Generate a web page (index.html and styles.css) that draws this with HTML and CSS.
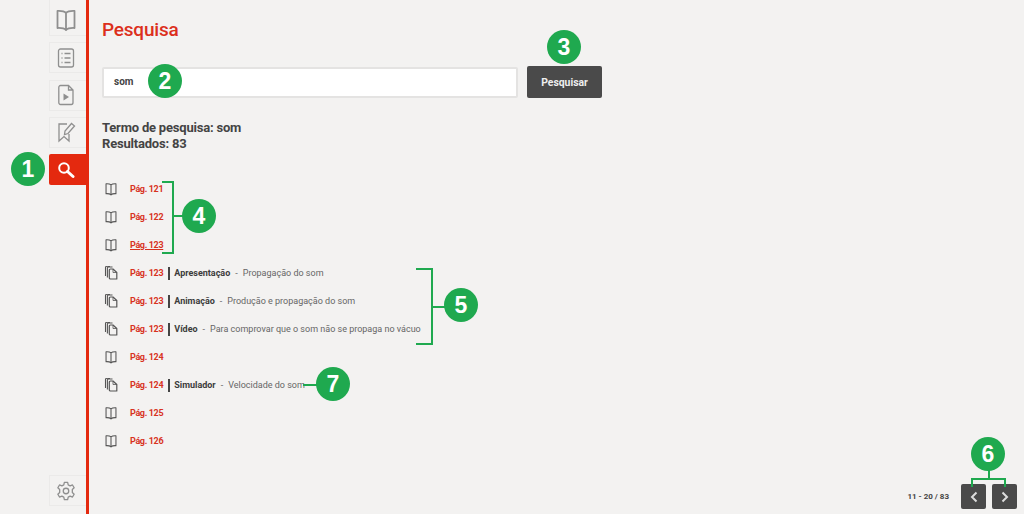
FILE: index.html
```html
<!DOCTYPE html>
<html lang="pt">
<head>
<meta charset="utf-8">
<title>Pesquisa</title>
<link rel="stylesheet" href="styles.css">
</head>
<body>
<svg class="defs" width="0" height="0">
  <symbol id="book" viewBox="0 0 24 24"><path d="M12 5C10.500 3.500 7.500 2.800 3.500 3V20C7.500 19.800 10.500 20.500 12 22C13.500 20.500 16.500 19.800 20.500 20V3C16.500 2.800 13.500 3.500 12 5ZM12 5V22" fill="none" stroke="currentColor" stroke-width="1.800" stroke-linejoin="round"/></symbol>
  <symbol id="copies" viewBox="0 0 14 14"><path d="M6.500 3H9L12.800 6.500V13H6.500C5.800 13 5.300 12.500 5.300 11.800V4.200C5.300 3.500 5.800 3 6.500 3Z" fill="none" stroke="currentColor" stroke-width="1.200" stroke-linejoin="round"/><path d="M9 3V6.500H12.800" fill="none" stroke="currentColor" stroke-width=".8"/><path d="M8.500 1H4.500C3.800 1 3.400 1.400 3.400 2.100V11.500M6 .2H3C2.200 .2 1.500 1 1.500 1.800V10" fill="none" stroke="currentColor" stroke-width="1.100"/></symbol>
</svg>
<div class="app">
  <aside class="side">
    <a class="tab tab-first"><svg class="ico-24" viewBox="0 0 24 24"><use href="#book"/></svg></a>
    <a class="tab"><svg class="ico-22" viewBox="0 0 22 22" fill="none" stroke="currentColor" stroke-width="1.300"><rect x="3.500" y="2" width="15" height="18" rx="2"/><path d="M6.500 6.500H7.500M9.500 6.500H15.500M6.500 11H7.500M9.500 11H15.500M6.500 15.500H7.500M9.500 15.500H15.500"/></svg></a>
    <a class="tab"><svg class="ico-22" viewBox="0 0 22 22" fill="none" stroke="currentColor" stroke-width="1.300"><path d="M5.500 1.500H13.500L18 6V18.500C18 19.500 17.300 20.500 16.200 20.500H5.500C4.500 20.500 3.800 19.500 3.800 18.500V3.500C3.800 2.500 4.500 1.500 5.500 1.500ZM13.500 1.500V6H18"/><path d="M8.500 9.500L14 13L8.500 16.500Z" fill="currentColor" stroke="none"/></svg></a>
    <a class="tab"><svg class="ico-22" viewBox="0 0 22 22" fill="none" stroke="currentColor" stroke-width="1.300"><path d="M12 3H4V20L9 15.500L14 20V13"/><path d="M9.500 13.500L10 10L16.500 2.500L19.500 5L13 12.500Z"/></svg></a>
    <a class="tab tab-active"><svg class="ico-18" viewBox="0 0 18 18" fill="none" stroke="currentColor"><circle cx="7" cy="7" r="4.800" stroke-width="2"/><path d="M10.500 10.500L16 15.500" stroke-width="3" stroke-linecap="round"/></svg></a>
    <a class="tab tab-gear"><svg class="ico-22" viewBox="0 0 24 24" fill="none" stroke="currentColor" stroke-width="1.400" stroke-linejoin="round"><circle cx="12" cy="12" r="3"/><path d="M10.200 2.500H13.800L14.400 5.300L16.500 6.400L19.100 5.400L20.900 8.500L18.900 10.400V13.600L20.900 15.500L19.100 18.600L16.500 17.600L14.400 18.700L13.800 21.500H10.200L9.600 18.700L7.500 17.600L4.900 18.600L3.100 15.500L5.100 13.600V10.400L3.100 8.500L4.900 5.400L7.500 6.400L9.600 5.300Z"/></svg></a>
  </aside>
  <main class="main">
    <h1 class="title">Pesquisa</h1>
    <form class="search">
      <div class="field">som</div>
      <button class="go" type="button">Pesquisar</button>
    </form>
    <p class="summary">Termo de pesquisa: som<br>Resultados: 83</p>
    <ul class="results">
      <li class="row"><svg class="ri" viewBox="0 0 24 24"><use href="#book"/></svg><a class="pg">Pág. 121</a></li>
      <li class="row"><svg class="ri" viewBox="0 0 24 24"><use href="#book"/></svg><a class="pg">Pág. 122</a></li>
      <li class="row"><svg class="ri" viewBox="0 0 24 24"><use href="#book"/></svg><a class="pg pg-on">Pág. 123</a></li>
      <li class="row"><svg class="ri" viewBox="0 0 14 14"><use href="#copies"/></svg><a class="pg">Pág. 123</a><b class="kind">Apresentação</b><span class="dash">-</span><span class="desc">Propagação do som</span></li>
      <li class="row"><svg class="ri" viewBox="0 0 14 14"><use href="#copies"/></svg><a class="pg">Pág. 123</a><b class="kind">Animação</b><span class="dash">-</span><span class="desc">Produção e propagação do som</span></li>
      <li class="row"><svg class="ri" viewBox="0 0 14 14"><use href="#copies"/></svg><a class="pg">Pág. 123</a><b class="kind">Vídeo</b><span class="dash">-</span><span class="desc">Para comprovar que o som não se propaga no vácuo</span></li>
      <li class="row"><svg class="ri" viewBox="0 0 24 24"><use href="#book"/></svg><a class="pg">Pág. 124</a></li>
      <li class="row"><svg class="ri" viewBox="0 0 14 14"><use href="#copies"/></svg><a class="pg">Pág. 124</a><b class="kind">Simulador</b><span class="dash">-</span><span class="desc">Velocidade do som</span></li>
      <li class="row"><svg class="ri" viewBox="0 0 24 24"><use href="#book"/></svg><a class="pg">Pág. 125</a></li>
      <li class="row"><svg class="ri" viewBox="0 0 24 24"><use href="#book"/></svg><a class="pg">Pág. 126</a></li>
    </ul>
    <footer class="pager">
      <span class="count">11 - 20 / 83</span>
      <button class="arrow" type="button"><svg viewBox="0 0 10 14" width="10" height="14" fill="none" stroke="currentColor" stroke-width="2"><path d="M7.500 2.500L3 7L7.500 11.500"/></svg></button>
      <button class="arrow" type="button"><svg viewBox="0 0 10 14" width="10" height="14" fill="none" stroke="currentColor" stroke-width="2"><path d="M2.500 2.500L7 7L2.500 11.500"/></svg></button>
    </footer>
  </main>
</div>
<div class="marks">
  <span class="line v b4v"></span><span class="line h b4a"></span><span class="line h b4b"></span><span class="line h b4c"></span>
  <span class="line v b5v"></span><span class="line h b5a"></span><span class="line h b5b"></span><span class="line h b5c"></span>
  <span class="line h l7"></span>
  <span class="line v b6a"></span><span class="line h b6b"></span><span class="line v b6c"></span><span class="line v b6d"></span>
  <span class="dot d1">1</span><span class="dot d2">2</span><span class="dot d3">3</span><span class="dot d4">4</span><span class="dot d5">5</span><span class="dot d6">6</span><span class="dot d7">7</span>
</div>
</body>
</html>
```
FILE: styles.css
```css
* { box-sizing: border-box; }
html, body { margin: 0; height: 100%; }
body { background: #f3f2f1; font-family: Roboto, "Noto Sans", sans-serif; color: #444; overflow: hidden; position: relative; }
.defs { position: absolute; }
.app { display: flex; height: 514px; }

.side { width: 89px; flex: none; border-right: 3px solid #e4290f; display: flex; flex-direction: column; align-items: flex-end; gap: 6.330px; padding-bottom: 8px; }
.tab { width: 37px; height: 31px; flex: none; display: flex; align-items: center; justify-content: center; padding-right: 5px; color: #8f8f8f; border: 1px solid #ebeae9; border-right: 0; }
.tab-first { height: 36px; border-top: 0; padding-top: 4px; }
.tab-active { background: #e4290f; color: #fff; border: 0; border-radius: 2px 0 0 2px; padding-right: 4px; }
.tab-gear { margin-top: auto; }
.ico-24 { width: 24px; height: 24px; }
.ico-22 { width: 22px; height: 22px; }
.ico-18 { width: 18px; height: 18px; }

.main { flex: 1; min-width: 0; padding: 0 7px 0 13px; display: flex; flex-direction: column; }
.title { margin: 16px 0 0; height: 28px; font-size: 19px; line-height: 28px; font-weight: 500; letter-spacing: -.2px; color: #dc2f1c; }
.search { display: flex; gap: 9px; margin-top: 22px; align-items: flex-start; }
.field { width: 416px; height: 31px; background: #fff; border: 2px solid #e4e3e2; border-radius: 2px; padding-left: 10px; margin-top: 1px; font-size: 10px; line-height: 26px; font-weight: 700; color: #444; }
.go { width: 75px; height: 32px; border: 0; border-radius: 2px; background: #4a4a4a; color: #eee; font: 700 10.400px Roboto, sans-serif; padding: 0; }
.summary { margin: 22px 0 0; font-size: 13px; line-height: 15.500px; font-weight: 700; letter-spacing: -.2px; color: #444; }

.results { list-style: none; margin: 24px 0 0; padding: 0; }
.row { height: 28px; display: flex; align-items: center; font-size: 9px; white-space: nowrap; }
.ri { width: 14px; height: 14px; flex: none; margin-left: 2px; margin-right: 12px; color: #555; }
.pg { color: #d8321f; font-weight: 700; letter-spacing: -.35px; }
.pg-on { text-decoration: underline; }
.kind { font-weight: 700; color: #3c3c3c; border-left: 2px solid #444; line-height: 13px; margin-left: 5px; padding-left: 4px; }
.dash { color: #666; margin: 0 5px; }
.desc { color: #666; }

.pager { margin-top: auto; margin-bottom: 5px; display: flex; justify-content: flex-end; align-items: center; gap: 6px; }
.count { font-size: 8px; font-weight: 700; color: #444; margin-right: 6px; }
.arrow { width: 25px; height: 25px; padding: 0; border: 0; border-radius: 2px; background: #4a4a4a; color: #ddd; display: flex; align-items: center; justify-content: center; }

.marks { position: absolute; inset: 0; pointer-events: none; }
.dot { position: absolute; width: 34px; height: 34px; border-radius: 50%; background: #1fa94f; color: #fff; font: 700 23px/34px "Liberation Sans", Arial, sans-serif; text-align: center; }
.d1 { left: 11px; top: 152px; }
.d2 { left: 148px; top: 64px; }
.d3 { left: 547px; top: 30px; }
.d4 { left: 182px; top: 199px; }
.d5 { left: 444px; top: 288px; }
.d6 { left: 971px; top: 437px; }
.d7 { left: 316px; top: 367px; }
.line { position: absolute; background: #1fa94f; }
.line.h { height: 2px; }
.line.v { width: 2px; }
.b4v { left: 172px; top: 181px; height: 73px; }
.b4a { left: 162px; top: 181px; width: 12px; }
.b4b { left: 174px; top: 215px; width: 10px; }
.b4c { left: 162px; top: 252px; width: 12px; }
.b5v { left: 431px; top: 268px; height: 77px; }
.b5a { left: 416px; top: 268px; width: 16px; }
.b5b { left: 432px; top: 306px; width: 14px; }
.b5c { left: 416px; top: 343px; width: 16px; }
.l7 { left: 303px; top: 384px; width: 15px; }
.b6a { left: 988px; top: 470px; height: 8px; }
.b6b { left: 971px; top: 478px; width: 35px; }
.b6c { left: 971px; top: 478px; height: 9px; }
.b6d { left: 1004px; top: 478px; height: 9px; }
```
